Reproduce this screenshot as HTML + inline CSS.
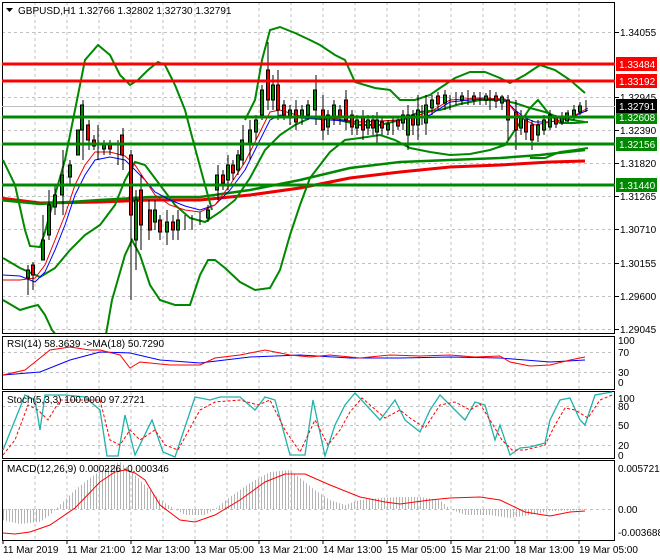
<!DOCTYPE html>
<html><head><meta charset="utf-8"><style>
html,body{margin:0;padding:0;background:#fff;width:660px;height:560px;overflow:hidden}
svg{display:block}
text{font-family:"Liberation Sans",sans-serif;font-size:10px;fill:#000}
</style></head><body>
<svg width="660" height="560" viewBox="0 0 660 560" xmlns="http://www.w3.org/2000/svg">
<defs>
<pattern id="hist" width="3" height="10" patternUnits="userSpaceOnUse"><rect x="0" y="0" width="1" height="10" fill="#b4b4b4"/></pattern>
<clipPath id="cm"><rect x="2" y="2" width="613" height="331"/></clipPath>
</defs>
<rect x="0" y="0" width="660" height="560" fill="#fff"/>
<g stroke="#c0c0c0" stroke-dasharray="3,3" stroke-width="1">
<path d="M35 2V540M67 2V540M99 2V540M131 2V540M163 2V540M195 2V540M227 2V540M259 2V540M291 2V540M323 2V540M355 2V540M387 2V540M419 2V540M451 2V540M483 2V540M515 2V540M547 2V540M579 2V540"/>
<path d="M2 32.5H615M2 97.5H615M2 130.5H615M2 163.5H615M2 196.5H615M2 229.5H615M2 263.5H615M2 296.5H615M2 329.5H615"/>
<path d="M2 352.5H615M2 372.5H615M2 406.5H615M2 425.5H615M2 445.5H615M2 509.5H615"/>
</g>
<g fill="none" stroke="#000" stroke-width="1">
<rect x="2.5" y="2.5" width="612" height="331"/>
<rect x="2.5" y="336.5" width="612" height="53"/>
<rect x="2.5" y="391.5" width="612" height="67"/>
<rect x="2.5" y="460.5" width="612" height="80"/>
</g>
<g clip-path="url(#cm)">
<path d="M2 106.5H615" stroke="#c0c0c0"/>
<polyline fill="none" stroke="#e00" stroke-width="3" points="0,198 40,203 100,202 150,200 200,200 250,195 300,188 350,178 400,172 450,167 500,165 550,162 585,161"/>
<polyline fill="none" stroke="#080" stroke-width="2.5" points="0,200 40,204 100,200 150,197 200,197 250,190 300,180 350,168 400,162 450,160 500,158 540,155 585,150"/>
<g fill="none" stroke="#080" stroke-width="2">
<polyline points="3,160 15,185 25,230 30,246 40,247 45,232 55,195 65,160 75,110 85,60 98,45 110,55 120,75 130,85 138,80 148,70 158,62 165,65 175,85 185,110 195,148 205,185 212,210"/>
<polyline points="245,120 255,100 262,60 270,30 280,27 295,33 310,40 320,45 335,55 345,60 355,82 375,88 390,90 400,100 415,100 430,95 440,88 455,78 470,72 485,72 500,78 510,83 525,75 540,65 555,70 570,80 585,93"/>
<polyline points="3,258 20,268 40,277 55,268 70,250 85,235 100,225 115,205 125,180 135,162 145,165 160,185 175,205 190,218 205,222 220,212 235,200 250,178 265,150 280,135 295,125 310,118 330,118 360,125 380,125 400,120 420,112 440,110 460,104 480,100 500,100 515,103 530,108 545,112 560,118 585,122"/>
<polyline points="3,300 20,310 30,307 38,305 45,315 52,330 60,340"/>
<polyline points="105,340 112,300 125,255 132,240 140,255 150,285 160,300 175,305 190,305 200,275 208,260 215,260 225,268 240,282 255,290 270,288 280,270 290,235 300,205 310,178 320,165 330,152 345,140 360,138 380,135 395,140 410,148 430,152 450,155 470,154 490,150 505,145 515,130 522,120 530,108 538,100 550,115 560,123 575,123 588,122"/>
<polyline points="530,158 545,158 560,152 575,150 588,148"/>
</g>
<polyline fill="none" stroke="#00f" stroke-width="1" points="3,275 20,276 35,282 45,272 55,250 65,225 75,195 85,175 95,160 110,157 125,160 135,170 145,180 155,192 170,200 185,206 200,210 215,205 230,190 245,170 260,140 270,120 280,115 300,118 330,120 360,122 400,120 430,115 450,102 480,99 505,100 515,110 525,118 535,122 550,122 570,118 588,110"/>
<polyline fill="none" stroke="#e00" stroke-width="1" points="3,280 20,280 35,278 45,265 55,240 65,215 75,185 85,165 95,152 110,152 125,156 135,165 145,180 155,195 170,205 185,210 200,212 215,205 230,185 245,162 260,132 270,112 280,110 300,116 330,118 360,122 400,120 430,112 450,100 480,98 505,99 515,112 525,120 535,125 550,122 570,118 588,108"/>
<g stroke="#000" stroke-width="1" fill="none">
<path d="M28 265V295M33 262V290M43 215V260M49 190V240M55 185V215M63 150V215M70 160V185M83 100V160M89 120V150M94 135V150M98 125V160M104 140V155M110 140V155M118 140V165M123 128V170M131 150V300M136 190V270M141 175V250M149 200V240M155 200V230M160 215V240M167 210V245M173 215V240M178 210V240M185 215V230M192 215V230M200 212V225M208 205V222M218 165V200M223 170V190M228 155V190M233 160V180M238 150V175M243 125V165M250 120V160M256 115V140M262 85V120M268 42V110M273 75V110M278 70V120M284 100V120M290 105V125M296 100V130M302 105V125M308 100V120M316 75V125M323 95V140M328 110V135M334 100V125M340 105V125M346 90V130M352 110V135M357 115V135M363 110V140M368 115V135M373 115V135M377 112V145M382 118V135M388 120V135M393 118V135M398 118V130M403 110V130M408 105V150M413 110V135M418 95V140M422 105V125M426 95V135M432 95V115M438 92V110M445 90V110M450 95V110M456 92V105M462 92V105M468 90V105M474 92V105M480 92V105M486 93V105M490 90V110M496 92V108M502 95V110M508 95V140M516 100V150M521 110V135M526 115V140M532 120V150M538 120V142M544 115V135M550 110V130M556 115V128M562 112V125M568 110V122M574 105V120M580 102V115M586 100V112"/>
</g>
<g stroke="#000" stroke-width="1">
<rect x="26.5" y="270" width="3" height="8" fill="#080"/><rect x="31.5" y="265" width="3" height="10" fill="#e00"/>
<rect x="41.5" y="240" width="3" height="20" fill="#080"/><rect x="47.5" y="205" width="3" height="30" fill="#080"/><rect x="53.5" y="195" width="3" height="12" fill="#080"/><rect x="60.5" y="175" width="3" height="20" fill="#080"/><rect x="68.5" y="165" width="3" height="12" fill="#080"/><rect x="76.5" y="130" width="3" height="25" fill="#080"/><rect x="80.5" y="105" width="3" height="25" fill="#080"/><rect x="86.5" y="125" width="3" height="15" fill="#e00"/><rect x="92.5" y="140" width="3" height="6" fill="#e00"/><rect x="102.5" y="143" width="3" height="6" fill="#080"/><rect x="108.5" y="143" width="3" height="6" fill="#e00"/><rect x="120.5" y="135" width="3" height="20" fill="#e00"/><rect x="129.5" y="155" width="3" height="60" fill="#e00"/><rect x="134.5" y="200" width="3" height="40" fill="#080"/><rect x="139.5" y="190" width="3" height="35" fill="#e00"/><rect x="148.5" y="210" width="3" height="20" fill="#e00"/><rect x="153.5" y="210" width="3" height="12" fill="#080"/><rect x="158.5" y="220" width="3" height="12" fill="#e00"/><rect x="165.5" y="222" width="3" height="10" fill="#080"/><rect x="171.5" y="222" width="3" height="8" fill="#e00"/><rect x="176.5" y="220" width="3" height="10" fill="#080"/><rect x="206.5" y="210" width="3" height="8" fill="#080"/><rect x="215.5" y="175" width="3" height="15" fill="#080"/><rect x="221.5" y="175" width="3" height="8" fill="#e00"/><rect x="226.5" y="165" width="3" height="15" fill="#080"/><rect x="231.5" y="165" width="3" height="8" fill="#e00"/><rect x="236.5" y="155" width="3" height="15" fill="#080"/><rect x="240.5" y="140" width="3" height="20" fill="#080"/><rect x="248.5" y="130" width="3" height="15" fill="#080"/><rect x="254.5" y="120" width="3" height="12" fill="#080"/><rect x="260.5" y="90" width="3" height="25" fill="#080"/><rect x="266.5" y="70" width="3" height="30" fill="#e00"/><rect x="271.5" y="85" width="3" height="15" fill="#080"/><rect x="276.5" y="85" width="3" height="25" fill="#e00"/><rect x="282.5" y="105" width="3" height="10" fill="#e00"/><rect x="288.5" y="110" width="3" height="8" fill="#080"/><rect x="294.5" y="110" width="3" height="12" fill="#e00"/><rect x="300.5" y="110" width="3" height="8" fill="#080"/><rect x="306.5" y="105" width="3" height="10" fill="#080"/><rect x="313.5" y="90" width="3" height="20" fill="#080"/><rect x="321.5" y="110" width="3" height="20" fill="#e00"/><rect x="326.5" y="115" width="3" height="12" fill="#080"/><rect x="332.5" y="105" width="3" height="12" fill="#080"/><rect x="338.5" y="110" width="3" height="8" fill="#e00"/><rect x="344.5" y="100" width="3" height="20" fill="#e00"/><rect x="350.5" y="115" width="3" height="12" fill="#e00"/><rect x="355.5" y="120" width="3" height="8" fill="#080"/><rect x="361.5" y="118" width="3" height="12" fill="#e00"/><rect x="366.5" y="120" width="3" height="8" fill="#080"/><rect x="371.5" y="120" width="3" height="8" fill="#e00"/><rect x="375.5" y="120" width="3" height="12" fill="#080"/><rect x="380.5" y="122" width="3" height="6" fill="#e00"/><rect x="386.5" y="124" width="3" height="6" fill="#080"/><rect x="396.5" y="120" width="3" height="6" fill="#e00"/><rect x="401.5" y="115" width="3" height="8" fill="#080"/><rect x="406.5" y="115" width="3" height="20" fill="#080"/><rect x="411.5" y="115" width="3" height="10" fill="#e00"/><rect x="416.5" y="110" width="3" height="15" fill="#080"/><rect x="424.5" y="105" width="3" height="18" fill="#080"/><rect x="430.5" y="100" width="3" height="8" fill="#080"/><rect x="436.5" y="96" width="3" height="8" fill="#e00"/><rect x="443.5" y="95" width="3" height="8" fill="#080"/><rect x="460.5" y="96" width="3" height="4" fill="#080"/><rect x="472.5" y="96" width="3" height="4" fill="#e00"/><rect x="484.5" y="96" width="3" height="4" fill="#080"/><rect x="494.5" y="96" width="3" height="5" fill="#e00"/><rect x="500.5" y="97" width="3" height="6" fill="#080"/><rect x="506.5" y="100" width="3" height="20" fill="#e00"/><rect x="514.5" y="112" width="3" height="18" fill="#e00"/><rect x="519.5" y="118" width="3" height="10" fill="#080"/><rect x="524.5" y="120" width="3" height="12" fill="#e00"/><rect x="530.5" y="125" width="3" height="15" fill="#e00"/><rect x="536.5" y="125" width="3" height="10" fill="#080"/><rect x="542.5" y="120" width="3" height="10" fill="#080"/><rect x="548.5" y="115" width="3" height="12" fill="#080"/><rect x="554.5" y="118" width="3" height="6" fill="#e00"/><rect x="560.5" y="116" width="3" height="6" fill="#080"/><rect x="565.5" y="113" width="3" height="8" fill="#080"/><rect x="572.5" y="110" width="3" height="6" fill="#080"/><rect x="578.5" y="106" width="3" height="6" fill="#080"/>
</g>
<g stroke-width="3" fill="none">
<path d="M2 64H615M2 81H615" stroke="#f00"/>
<path d="M2 117H615M2 144H615M2 185H615" stroke="#080"/>
</g>
</g>
<path d="M6 8h7l-3.5 4z" fill="#000"/>
<text x="18" y="14">GBPUSD,H1  1.32766 1.32802 1.32730 1.32791</text>
<g>
<path d="M615 32.5h4M615 97.5h4M615 130.5h4M615 163.5h4M615 196.5h4M615 229.5h4M615 263.5h4M615 296.5h4M615 329.5h4" stroke="#000"/>
<text x="620" y="36">1.34055</text><text x="620" y="101">1.32945</text><text x="620" y="134">1.32390</text><text x="620" y="167">1.31820</text><text x="620" y="200">1.31265</text><text x="620" y="233">1.30710</text><text x="620" y="267">1.30155</text><text x="620" y="300">1.29600</text><text x="620" y="333">1.29045</text>
<rect x="616" y="57" width="41" height="14" fill="#f00"/><text x="619" y="68" style="fill:#fff">1.33484</text>
<rect x="616" y="74" width="41" height="14" fill="#f00"/><text x="619" y="85" style="fill:#fff">1.33192</text>
<rect x="616" y="110" width="41" height="14" fill="#080"/><text x="619" y="121" style="fill:#fff">1.32608</text>
<rect x="616" y="99" width="41" height="14" fill="#000"/><text x="619" y="110" style="fill:#fff">1.32791</text>
<rect x="616" y="137" width="41" height="14" fill="#080"/><text x="619" y="148" style="fill:#fff">1.32156</text>
<rect x="616" y="178" width="41" height="14" fill="#080"/><text x="619" y="189" style="fill:#fff">1.31440</text>
</g>
<text x="7" y="347">RSI(14) 58.3639  -&gt;MA(18) 50.7290</text>
<polyline fill="none" stroke="#00f" stroke-width="1" points="3,375 40,372 70,360 100,352 130,353 160,360 200,363 250,357 300,355 350,358 400,358 450,357 500,358 550,362 585,360"/>
<polyline fill="none" stroke="#f00" stroke-width="1" points="3,375 25,370 35,362 50,350 70,347 90,350 100,350 120,355 130,368 140,362 170,365 200,365 215,358 240,355 265,350 290,355 310,357 330,355 360,358 390,355 420,356 450,355 475,357 500,356 510,362 530,366 550,365 570,360 585,357"/>
<text x="618" y="344">100</text><text x="618" y="356">70</text><text x="618" y="376">30</text><text x="618" y="386">0</text>
<polyline fill="none" stroke="#20b2aa" stroke-width="1.3" points="3,450 15,420 25,395 35,400 40,430 45,395 65,395 85,397 100,410 107,456 118,456 125,415 135,455 152,420 163,452 175,457 195,397 210,400 220,397 240,397 255,410 265,397 275,400 290,455 305,455 313,400 325,456 335,425 345,405 355,393 380,420 395,400 405,420 420,432 430,410 440,395 455,410 465,420 475,402 485,405 495,440 500,425 510,455 520,448 530,447 545,443 550,420 560,400 570,398 580,420 585,425 595,395 612,392"/>
<polyline fill="none" stroke="#f00" stroke-width="1" stroke-dasharray="3,2" points="3,455 15,440 28,405 38,410 48,420 60,400 85,400 100,400 110,440 120,445 130,430 140,440 155,430 165,445 178,450 200,410 215,402 240,400 258,405 270,400 285,430 300,452 315,420 328,445 340,430 350,412 362,398 385,418 400,410 410,418 425,428 440,405 455,402 470,410 480,404 490,420 502,440 512,450 525,450 545,445 555,425 565,408 575,410 588,418 600,400 612,395"/>
<text x="7" y="403">Stoch(5,3,3) 100.0000 97.2721</text>
<text x="618" y="402">100</text><text x="618" y="410">80</text><text x="618" y="429">50</text><text x="618" y="449">20</text><text x="618" y="459">0</text>
<polygon fill="url(#hist)" points="3,509 3,520 20,524 40,522 50,515 60,505 75,490 90,478 105,468 120,462 130,470 145,485 160,500 175,509 185,515 205,515 215,509 230,497 250,483 270,472 290,470 300,478 315,490 330,500 345,505 360,500 380,498 400,497 420,497 440,500 450,509 465,515 490,515 510,518 530,515 550,511 585,510 585,509"/>
<polyline fill="none" stroke="#f00" stroke-width="1" points="3,533 15,534 30,532 50,525 75,508 100,482 115,472 125,470 135,473 145,480 160,505 180,520 195,522 215,515 240,500 265,482 285,474 305,474 330,485 360,497 385,502 400,504 430,500 450,498 480,497 500,500 525,512 550,516 570,512 585,511"/>
<text x="7" y="472">MACD(12,26,9) 0.000226 -0.000346</text>
<text x="618" y="472">0.005721</text><text x="618" y="513">0.00</text><text x="618" y="536">-0.003688</text>
<path d="M3 540v4M67 540v4M131 540v4M195 540v4M259 540v4M323 540v4M387 540v4M451 540v4M515 540v4M579 540v4" stroke="#000"/>
<text x="3" y="553">11 Mar 2019</text><text x="67" y="553">11 Mar 21:00</text><text x="131" y="553">12 Mar 13:00</text><text x="195" y="553">13 Mar 05:00</text><text x="259" y="553">13 Mar 21:00</text><text x="323" y="553">14 Mar 13:00</text><text x="387" y="553">15 Mar 05:00</text><text x="451" y="553">15 Mar 21:00</text><text x="515" y="553">18 Mar 13:00</text><text x="579" y="553">19 Mar 05:00</text>
</svg>
</body></html>
